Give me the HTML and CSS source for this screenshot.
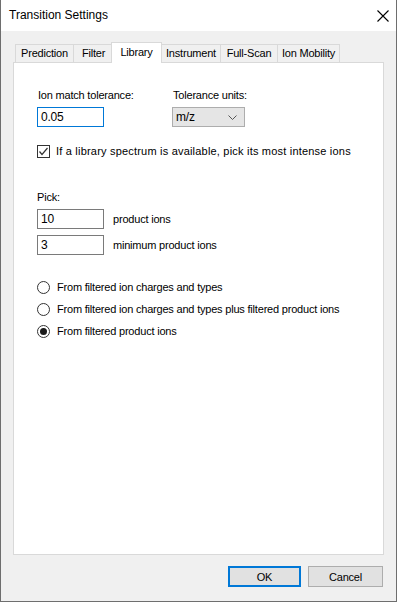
FILE: index.html
```html
<!DOCTYPE html>
<html>
<head>
<meta charset="utf-8">
<link rel="stylesheet" href="styles.css">
</head>
<body>
<div class="window">
  <div class="titlebar">
    <span class="title">Transition Settings</span>
    <svg class="close" width="12" height="12" viewBox="0 0 12 12"><path d="M0.5 0.5 L11.5 11.5 M11.5 0.5 L0.5 11.5" stroke="#000" stroke-width="1.1" fill="none"/></svg>
  </div>
  <div class="client">
    <div class="tabs">
      <div class="tab t-pred">Prediction</div>
      <div class="tab t-filter">Filter</div>
      <div class="tab selected t-lib">Library</div>
      <div class="tab t-inst">Instrument</div>
      <div class="tab t-full">Full-Scan</div>
      <div class="tab t-ion">Ion Mobility</div>
    </div>
    <div class="panel">
      <div class="row-top">
        <div class="field tol">
          <div class="label">Ion match tolerance:</div>
          <div class="textbox focused">0.05</div>
        </div>
        <div class="field units">
          <div class="label">Tolerance units:</div>
          <div class="combo"><span>m/z</span>
            <svg width="9" height="5" viewBox="0 0 9 5"><path d="M0.5 0.5 L4.5 4.5 L8.5 0.5" stroke="#555" stroke-width="1" fill="none"/></svg>
          </div>
        </div>
      </div>
      <div class="check-row">
        <span class="checkbox"><svg width="11" height="11" viewBox="0 0 11 11"><path d="M1.5 5.5 L4 8.5 L9.5 2" stroke="#333" stroke-width="1.2" fill="none"/></svg></span>
        <span class="check-text">If a library spectrum is available, pick its most intense ions</span>
      </div>
      <div class="pick-label">Pick:</div>
      <div class="pick-row"><div class="textbox">10</div><span>product ions</span></div>
      <div class="pick-row second"><div class="textbox">3</div><span>minimum product ions</span></div>
      <div class="radios">
        <div class="radio-row"><span class="radio"></span><span>From filtered ion charges and types</span></div>
        <div class="radio-row"><span class="radio"></span><span>From filtered ion charges and types plus filtered product ions</span></div>
        <div class="radio-row"><span class="radio on"></span><span>From filtered product ions</span></div>
      </div>
    </div>
    <div class="buttons">
      <div class="btn default">OK</div>
      <div class="btn">Cancel</div>
    </div>
  </div>
</div>
</body>
</html>
```
FILE: styles.css
```css
html, body {
  margin: 0;
  padding: 0;
  background: #f0f0f0;
}
.window {
  width: 397px;
  height: 602px;
  box-sizing: border-box;
  border: 1px solid #6e6e6e;
  border-top: none;
  background: #f0f0f0;
  display: flex;
  flex-direction: column;
  font-family: "Liberation Sans", Arial, sans-serif;
  font-size: 11px;
  letter-spacing: -0.2px;
  color: #000;
}
.titlebar {
  height: 31px;
  background: #fff;
  display: flex;
  align-items: center;
  justify-content: space-between;
  padding: 0 9px 0 8px;
  flex: none;
}
.title {
  font-family: "Liberation Sans", Arial, sans-serif;
  font-size: 12px;
  letter-spacing: 0;
  color: #000;
  margin-top: -1px;
}
.close {
  margin-right: -2px;
}
.client {
  flex: 1;
  display: flex;
  flex-direction: column;
  padding: 11px 12px 0 12px;
}
.tabs {
  display: flex;
  align-items: flex-end;
  height: 20px;
  padding-left: 2px;
  position: relative;
  z-index: 2;
}
.tab {
  height: 17px;
  line-height: 17px;
  box-sizing: content-box;
  border: 1px solid #d9d9d9;
  border-bottom: none;
  margin-right: -1px;
  text-align: center;
  background: #f0f0f0;
  white-space: nowrap;
}
.t-pred { width: 57px; }
.t-filter { width: 39px; }
.t-lib { width: 49px; }
.t-inst { width: 58px; }
.t-full { width: 56px; }
.t-ion { width: 61px; }
.tab.selected {
  height: 20px;
  line-height: 19px;
  background: #fff;
  margin: 0 -1px -1px -2px;
  position: relative;
  z-index: 3;
}
.panel {
  height: 493px;
  box-sizing: border-box;
  border: 1px solid #d9d9d9;
  background: #fff;
  padding: 26px 0 0 23px;
  display: flex;
  flex-direction: column;
}
.row-top {
  display: flex;
}
.field {
  display: flex;
  flex-direction: column;
}
.field.tol {
  width: 135px;
}
.label {
  height: 13px;
  line-height: 13px;
  margin-bottom: 5px;
  margin-left: 1px;
}
.textbox {
  width: 67px;
  height: 20px;
  box-sizing: border-box;
  border: 1px solid #7a7a7a;
  background: #fff;
  padding-left: 3px;
  line-height: 18px;
  font-size: 12px;
}
.textbox.focused {
  border-color: #0078d7;
}
.combo {
  width: 73px;
  height: 20px;
  box-sizing: border-box;
  border: 1px solid #adadad;
  background: #e5e5e5;
  display: flex;
  align-items: center;
  justify-content: space-between;
  padding: 0 7px 0 3px;
  font-size: 12px;
}
.check-row {
  display: flex;
  align-items: center;
  margin-top: 16px;
  height: 16px;
}
.check-text {
  letter-spacing: 0.2px;
}
.checkbox {
  width: 13px;
  height: 13px;
  box-sizing: border-box;
  border: 1px solid #333;
  display: flex;
  align-items: center;
  justify-content: center;
  margin-right: 6px;
}
.pick-label {
  margin-top: 32px;
  height: 13px;
  line-height: 13px;
  margin-bottom: 5px;
}
.pick-row {
  display: flex;
  align-items: center;
  gap: 9px;
}
.pick-row.second {
  margin-top: 6px;
}
.radios {
  margin-top: 25px;
  display: flex;
  flex-direction: column;
  gap: 8px;
}
.radio-row {
  display: flex;
  align-items: center;
  height: 14px;
}
.radio {
  width: 13px;
  height: 13px;
  box-sizing: border-box;
  border: 1px solid #333;
  border-radius: 50%;
  margin-right: 7px;
  display: flex;
  align-items: center;
  justify-content: center;
}
.radio.on::after {
  content: "";
  width: 7px;
  height: 7px;
  border-radius: 50%;
  background: #1a1a1a;
}
.buttons {
  display: flex;
  justify-content: flex-end;
  gap: 7px;
  margin-top: 11px;
  margin-right: 1px;
}
.btn {
  width: 75px;
  height: 21px;
  box-sizing: border-box;
  border: 1px solid #adadad;
  background: #e1e1e1;
  display: flex;
  align-items: center;
  justify-content: center;
}
.btn.default {
  width: 73px;
  border: 2px solid #0078d7;
}
```
